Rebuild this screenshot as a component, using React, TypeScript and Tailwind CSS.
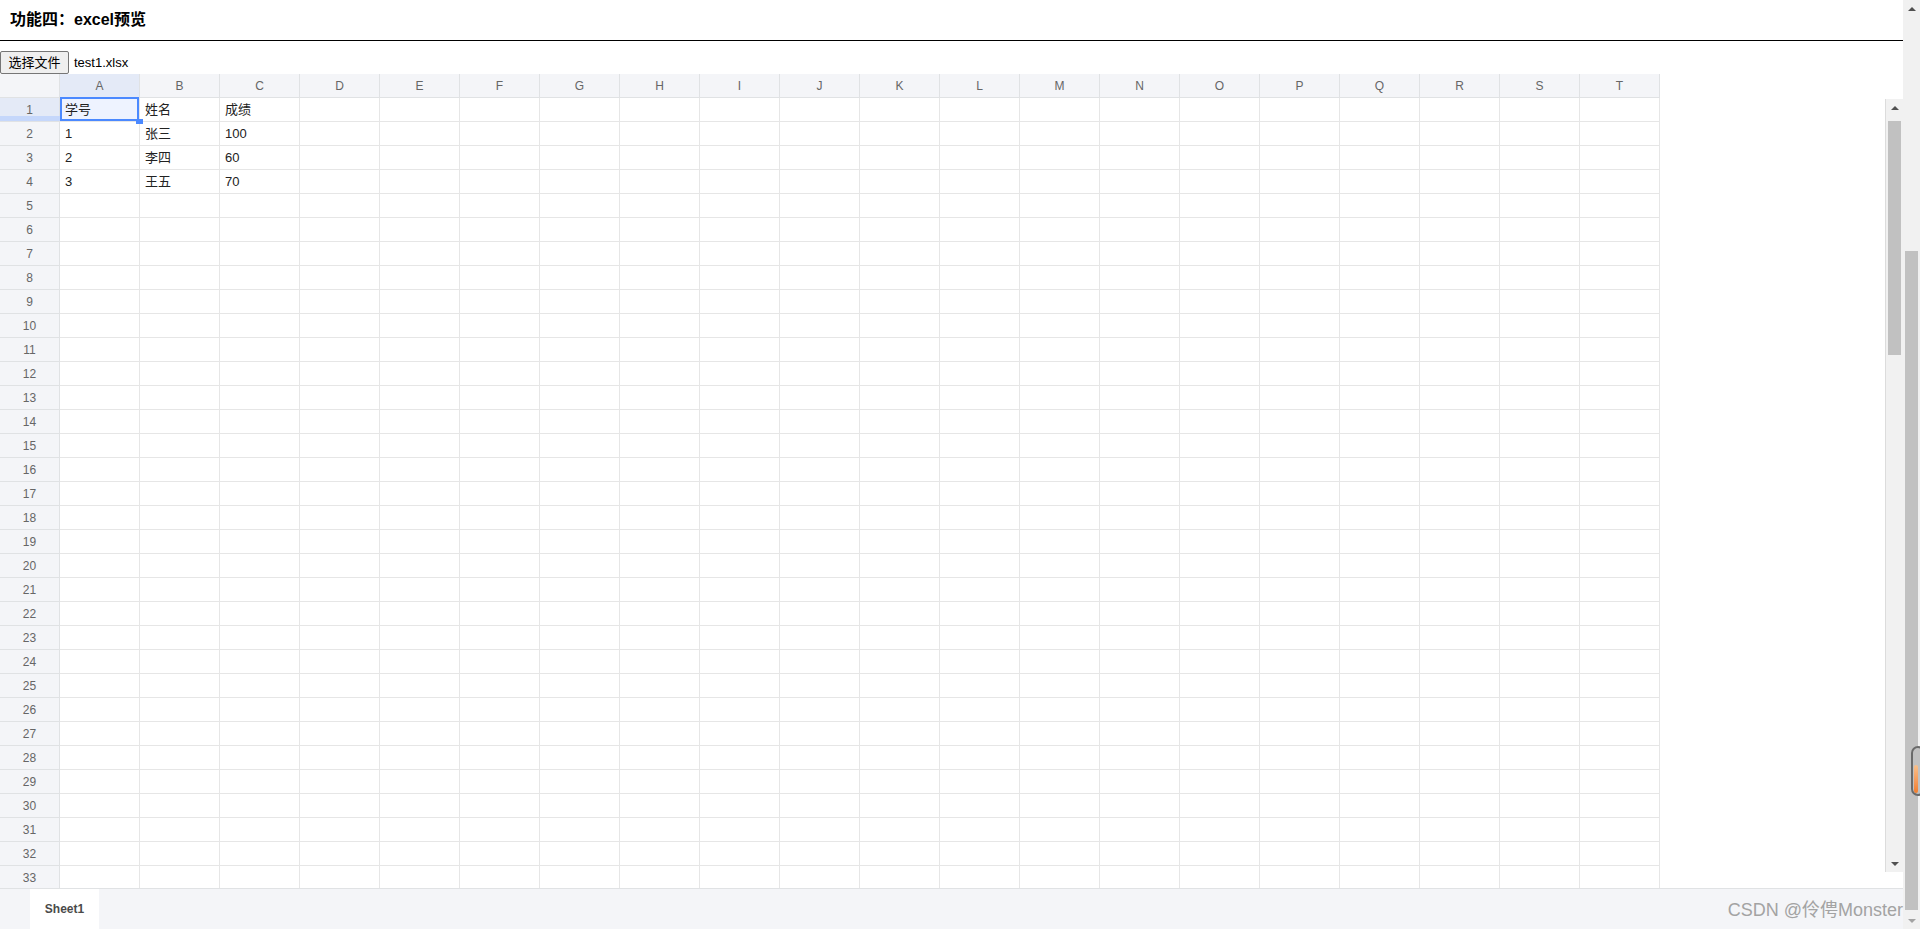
import React from "react";

const COLS = "ABCDEFGHIJKLMNOPQRST".split("");
const ROW_COUNT = 33;

// sheet contents, keyed by row number
const DATA: Record<number, string[]> = {
  1: ["学号", "姓名", "成绩"],
  2: ["1", "张三", "100"],
  3: ["2", "李四", "60"],
  4: ["3", "王五", "70"],
};

function Triangle({ up, color }: { up?: boolean; color: string }) {
  return (
    <svg width="8" height="4" viewBox="0 0 8 4" aria-hidden>
      <path d={up ? "M0 4L4 0L8 4Z" : "M0 0L8 0L4 4Z"} fill={color} />
    </svg>
  );
}

function HeaderCell({ label, active }: { label: string; active?: boolean }) {
  return (
    <div
      className={`flex items-center justify-center border-r border-b border-[#e0e2e4] text-[12px] text-[#666] ${
        active ? "bg-[#e4eaf7]" : "bg-[#f4f5f8]"
      }`}
    >
      {label}
    </div>
  );
}

function RowHeader({ n }: { n: number }) {
  const active = n === 1;
  return (
    <div
      className={`relative flex items-center justify-center border-r border-b border-[#e0e2e4] text-[12px] text-[#666] ${
        active ? "bg-[#e4eaf7]" : "bg-[#f4f5f8]"
      }`}
    >
      {n}
      {/* row resizer hover bar */}
      {active && <span className="absolute bottom-0 left-0 h-[5px] w-[60px] bg-[#c5d7fb]" />}
    </div>
  );
}

function Cell({ value, selected }: { value?: string; selected?: boolean }) {
  return (
    <div
      className={`relative flex items-center border-r border-b border-[#e6e6e6] pl-[5px] text-[13px] text-[#222] ${
        selected ? "z-10 bg-[#eef3ff]" : "bg-white"
      }`}
    >
      {value}
      {selected && (
        <>
          <span className="absolute top-[-1px] left-0 right-0 bottom-0 border-2 border-[#4b89ff]" />
          <span className="absolute top-[21px] left-[76px] h-[5px] w-[7px] bg-[#4b89ff]" />
        </>
      )}
    </div>
  );
}

function SheetGrid() {
  const rows = Array.from({ length: ROW_COUNT }, (_, i) => i + 1);
  return (
    <div className="h-[814px] w-[1660px] overflow-hidden">
      <div className="grid grid-cols-[60px_repeat(20,80px)] auto-rows-[24px]">
        <HeaderCell label="" />
        {COLS.map((c) => (
          <HeaderCell key={c} label={c} active={c === "A"} />
        ))}
        {rows.map((r) => (
          <React.Fragment key={r}>
            <RowHeader n={r} />
            {COLS.map((c, ci) => (
              <Cell key={c} value={DATA[r]?.[ci]} selected={r === 1 && ci === 0} />
            ))}
          </React.Fragment>
        ))}
      </div>
    </div>
  );
}

function InnerScrollbar() {
  return (
    <div className="flex w-[18px] flex-col pt-[25px] pb-[16px]">
      <div className="flex flex-1 flex-col border-l border-[#dcdcdc] bg-[#f1f1f1]">
        <div className="flex h-[17px] items-center justify-center pt-[1px]">
          <Triangle up color="#505050" />
        </div>
        <div className="mt-[5px] ml-[2px] h-[234px] w-[13px] bg-[#c1c1c1]" />
        <div className="flex-1" />
        <div className="flex h-[17px] items-center justify-center">
          <Triangle color="#505050" />
        </div>
      </div>
    </div>
  );
}

function PageScrollbar() {
  return (
    <div className="relative flex h-[929px] w-[17px] flex-col bg-[#f1f1f1]">
      <div className="flex h-[17px] items-center justify-center">
        <Triangle up color="#505050" />
      </div>
      <div className="mt-[234px] ml-[2px] h-[659px] w-[13px] bg-[#c1c1c1]" />
      <div className="flex-1" />
      <div className="flex h-[17px] items-center justify-center">
        <Triangle color="#a3a3a3" />
      </div>
      {/* floating widget peeking in from the right edge */}
      <div className="absolute top-[746px] left-[8px] h-[50px] w-[14px] overflow-hidden rounded-full border-2 border-[#6a6a6a] bg-[#c1c1c1]">
        <div className="mt-[17px] ml-[1px] h-[28px] w-[4px] rounded-full bg-gradient-to-b from-[#f9c08a] to-[#f07d2c]" />
      </div>
    </div>
  );
}

export default function App() {
  return (
    <div className="relative flex h-[929px] w-[1920px] overflow-hidden bg-white font-['Liberation_Sans','Noto_Sans_CJK_SC',sans-serif] text-black">
      <div className="flex min-w-0 flex-1 flex-col">
        <div className="flex h-[40px] items-center pl-[10px] text-[16px] font-bold">功能四：excel预览</div>
        <div className="h-px bg-black" />

        <div className="flex items-center pt-[10px]">
          <button
            type="button"
            className="flex h-[23px] w-[69px] items-center justify-center rounded-[2px] border border-[#767676] bg-[#efefef] text-[13px] text-black"
          >
            选择文件
          </button>
          <span className="ml-[5px] text-[13px]">test1.xlsx</span>
        </div>

        <div className="flex flex-1 flex-col">
          <div className="flex h-[814px]">
            <SheetGrid />
            <div className="flex-1" />
            <InnerScrollbar />
          </div>
          <div className="flex h-[41px] border-t border-[#e0e2e4] bg-[#f4f5f8]">
            <div className="ml-[30px] flex w-[69px] items-center justify-center bg-white text-[12px] font-bold text-[#4a4a4a]">
              Sheet1
            </div>
          </div>
        </div>
      </div>

      <PageScrollbar />

      <span className="absolute right-[17px] bottom-[9px] text-[18px] leading-[20px] text-[#a3a3a3]">CSDN @伶俜Monster</span>
    </div>
  );
}
